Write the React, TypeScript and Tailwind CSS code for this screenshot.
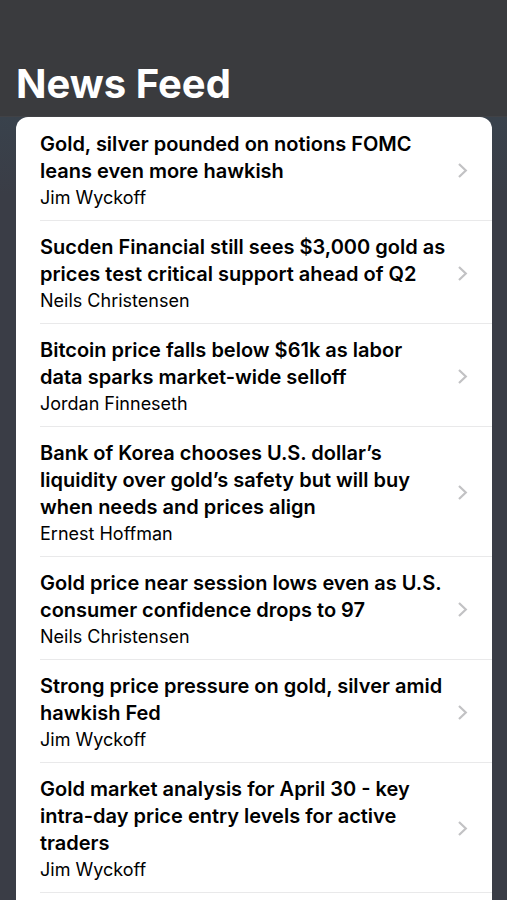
interface Article {
  title: string;
  author: string;
}

const articles: Article[] = [
  { title: "Gold, silver pounded on notions FOMC leans even more hawkish", author: "Jim Wyckoff" },
  { title: "Sucden Financial still sees $3,000 gold as prices test critical support ahead of Q2", author: "Neils Christensen" },
  { title: "Bitcoin price falls below $61k as labor data sparks market-wide selloff", author: "Jordan Finneseth" },
  { title: "Bank of Korea chooses U.S. dollar’s liquidity over gold’s safety but will buy when needs and prices align", author: "Ernest Hoffman" },
  { title: "Gold price near session lows even as U.S. consumer confidence drops to 97", author: "Neils Christensen" },
  { title: "Strong price pressure on gold, silver amid hawkish Fed", author: "Jim Wyckoff" },
  { title: "Gold market analysis for April 30 - key intra-day price entry levels for active traders", author: "Jim Wyckoff" },
];

const Chevron = () => (
  <svg viewBox="0 0 12 18" className="h-[18px] w-3 shrink-0" fill="none" stroke="#c2c2c4" strokeWidth="2.2" aria-hidden="true">
    <path d="M3 2 9.8 8.5 3 15" />
  </svg>
);

const ArticleRow = ({ article }: { article: Article }) => (
  <li className="ml-6 border-b border-[#e9e9ea]">
    <a href="#" className="flex items-center justify-between gap-2 pt-[13px] pr-6 pb-2.5 text-black">
      <div className="min-w-0">
        <h2 className="text-[20px] leading-[27px] font-semibold">{article.title}</h2>
        <p className="text-[18px] leading-[25px]">{article.author}</p>
      </div>
      <Chevron />
    </a>
  </li>
);

export default function App() {
  return (
    <div className="flex h-screen flex-col overflow-hidden bg-[#3a3d46] font-['Inter','Liberation_Sans',sans-serif]">
      <header className="border-b border-[#414246] bg-[#3a3b3e] px-4 pt-[60px] pb-2">
        <h1 className="text-[40px] leading-[48px] font-bold text-white">News Feed</h1>
      </header>
      <main className="min-h-0 flex-1 bg-linear-to-b from-[#39424c] to-[#3a3d46] to-10% pr-[15px] pl-4">
        <ul className="min-h-full rounded-t-xl bg-white pt-px">
          {articles.map((article) => (
            <ArticleRow key={article.title} article={article} />
          ))}
        </ul>
      </main>
    </div>
  );
}
